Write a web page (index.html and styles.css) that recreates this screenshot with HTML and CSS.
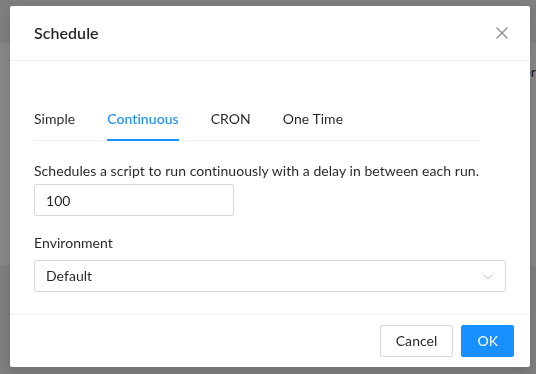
FILE: index.html
```html
<!DOCTYPE html>
<html lang="en">
<head>
    <meta charset="UTF-8">
    <meta name="viewport" content="width=device-width, initial-scale=1.0">
    <title>Schedule</title>
    <link rel="stylesheet" href="styles.css">
</head>
<body>
    <!-- page behind the dialog -->
    <div class="page">
        <div class="page-header"></div>
        <div class="page-content">
            <div class="page-row"><span>Monitor</span></div>
        </div>
    </div>

    <div class="overlay"></div>

    <div class="modal-wrap">
        <div class="modal">
            <div class="modal-header">
                <div class="modal-title">Schedule</div>
                <button class="modal-close" aria-label="Close">
                    <svg width="12" height="12" viewBox="0 0 12 12">
                        <path d="M0.5 0.5 L11.5 11.5 M11.5 0.5 L0.5 11.5" stroke="#8c8c8c" stroke-width="1.3" fill="none"/>
                    </svg>
                </button>
            </div>

            <div class="modal-body">
                <div class="tabs">
                    <div class="tabs-nav">
                        <div class="tab">Simple</div>
                        <div class="tab tab-active">Continuous</div>
                        <div class="tab">CRON</div>
                        <div class="tab">One Time</div>
                    </div>
                    <p class="tab-desc">Schedules a script to run continuously with a delay in between each run.</p>
                    <input class="input" type="text" value="100">
                </div>

                <div class="form-item">
                    <label class="form-label">Environment</label>
                    <div class="select">
                        <span>Default</span>
                        <svg class="select-arrow" width="12" height="12" viewBox="0 0 12 12">
                            <path d="M1.5 3.5 L6 8 L10.5 3.5" stroke="rgba(0,0,0,0.25)" stroke-width="1" fill="none"/>
                        </svg>
                    </div>
                </div>
            </div>

            <div class="modal-footer">
                <button class="btn">Cancel</button>
                <button class="btn btn-primary">OK</button>
            </div>
        </div>
    </div>
</body>
</html>
```

FILE: styles.css
```css
body {
    margin: 0;
    font-family: "Segoe UI", Lato, "Noto Sans", sans-serif;
    font-size: 14px;
    letter-spacing: 0.05px;
    color: rgba(0, 0, 0, 0.85);
    background: #e6e6e6;
    height: 100vh;
    overflow: hidden;
}

/* Background page */
.page-header {
    height: 43px;
    background: #e6e6e6;
}
.page-content {
    height: 223px;
    background: #f5f5f5;
    padding-top: 18px;
    box-sizing: border-box;
}
.page-row {
    text-align: right;
    line-height: 22px;
    color: #333;
}

/* Dialog */
.overlay {
    position: fixed;
    top: 0;
    left: 0;
    right: 0;
    bottom: 0;
    background: rgba(0, 0, 0, 0.45);
}
.modal-wrap {
    position: fixed;
    top: 0;
    left: 0;
    right: 0;
    bottom: 0;
}
.modal {
    width: 520px;
    margin: 6px 0 0 10px;
    background: #fff;
    border-radius: 2px;
    box-shadow: 0 4px 12px rgba(0, 0, 0, 0.15);
}
.modal-header {
    display: flex;
    align-items: center;
    justify-content: space-between;
    padding: 16px 0 16px 24px;
    border-bottom: 1px solid #f0f0f0;
    height: 22px;
}
.modal-title {
    font-size: 16px;
    line-height: 22px;
    font-weight: 600;
    color: rgba(0, 0, 0, 0.85);
}
.modal-close {
    width: 56px;
    height: 54px;
    border: none;
    background: none;
    padding: 0;
    display: flex;
    align-items: center;
    justify-content: center;
    cursor: pointer;
}

.modal-body {
    padding: 35px 24px 22px;
}

/* Tabs */
.tabs {
    width: fit-content;
}
.tabs-nav {
    display: flex;
    border-bottom: 1px solid #f0f0f0;
    margin-bottom: 19px;
}
.tab {
    padding: 12px 0 10px;
    line-height: 21px;
    margin-right: 32px;
    margin-bottom: -1px;
    border-bottom: 2px solid transparent;
    cursor: pointer;
}
.tab-active {
    color: #1890ff;
    font-weight: 500;
    border-bottom-color: #1890ff;
}
.tab-desc {
    margin: 0 0 2px;
    line-height: 22px;
    white-space: nowrap;
}

/* Form controls */
.input {
    display: block;
    width: 200px;
    height: 32px;
    box-sizing: border-box;
    padding: 4px 11px;
    border: 1px solid #d9d9d9;
    border-radius: 2px;
    font-family: inherit;
    font-size: 14px;
    letter-spacing: inherit;
    color: rgba(0, 0, 0, 0.85);
    outline: none;
}
.form-item {
    margin-top: 16px;
}
.form-label {
    display: block;
    line-height: 22px;
    padding-bottom: 6px;
}
.select {
    display: flex;
    align-items: center;
    justify-content: space-between;
    height: 32px;
    box-sizing: border-box;
    padding: 0 11px;
    border: 1px solid #d9d9d9;
    border-radius: 2px;
}
.select span {
    margin-top: -1px;
}
.select-arrow {
    margin-top: 1px;
}

/* Footer */
.modal-footer {
    display: flex;
    justify-content: flex-end;
    gap: 8px;
    padding: 10px 16px;
    border-top: 1px solid #f0f0f0;
}
.btn {
    height: 32px;
    padding: 4px 15px;
    font-family: inherit;
    font-size: 14px;
    letter-spacing: inherit;
    line-height: 22px;
    border: 1px solid #d9d9d9;
    border-radius: 2px;
    background: #fff;
    color: rgba(0, 0, 0, 0.85);
    cursor: pointer;
}
.btn-primary {
    background: #1890ff;
    border-color: #1890ff;
    color: #fff;
}
```
